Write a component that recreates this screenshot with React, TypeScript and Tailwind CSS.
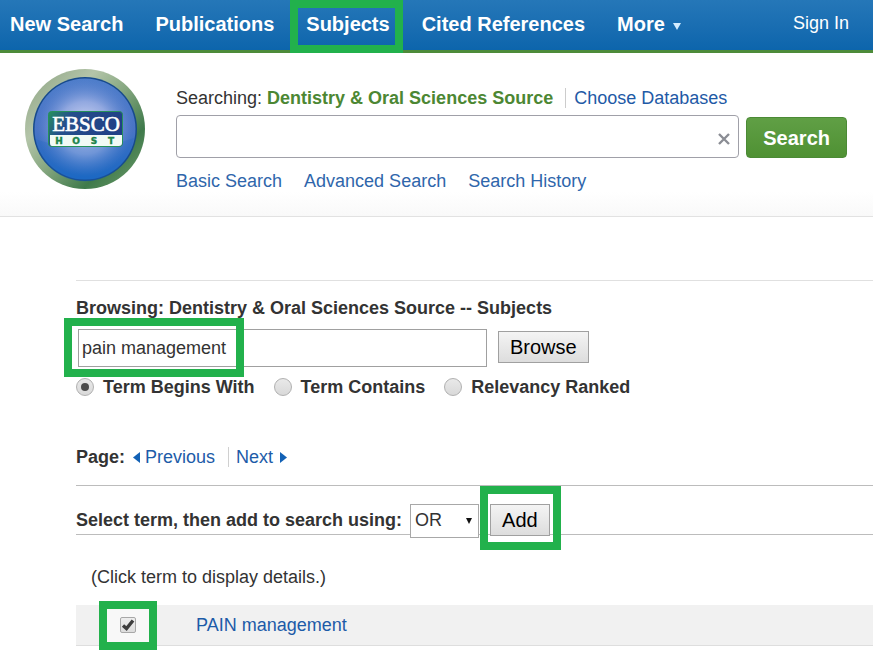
import { useState } from "react";
import type { ReactNode } from "react";
import { clsx } from "clsx";

const NAV_ITEMS = ["New Search", "Publications", "Subjects", "Cited References"];
const SEARCH_MODES = ["Basic Search", "Advanced Search", "Search History"];
const MATCH_TYPES = ["Term Begins With", "Term Contains", "Relevancy Ranked"];

function Highlight({ className }: { className: string }) {
  return <span className={clsx("pointer-events-none absolute z-10 border-8 border-[#22b14c]", className)} />;
}

function GreyButton({ children }: { children: ReactNode }) {
  return (
    <button
      type="button"
      className="h-8 border border-[#a0a0a0] bg-linear-to-b from-[#f4f4f4] to-[#dddddd] px-[11px] text-xl leading-6 text-black"
    >
      {children}
    </button>
  );
}

function Logo() {
  return (
    <svg viewBox="0 0 122 122" className="h-[122px] w-[122px]" role="img" aria-label="EBSCO Host">
      <defs>
        <linearGradient id="rim" x1="0.1" y1="0.1" x2="0.9" y2="0.9">
          <stop offset="0" stopColor="#98ad8e" />
          <stop offset="0.25" stopColor="#b4c5a9" />
          <stop offset="0.5" stopColor="#86a780" />
          <stop offset="0.8" stopColor="#3f7a4b" />
          <stop offset="1" stopColor="#5f9160" />
        </linearGradient>
        <linearGradient id="ball" x1="0" y1="0" x2="0" y2="1">
          <stop offset="0" stopColor="#4f7ecb" />
          <stop offset="0.5" stopColor="#4a74c5" />
          <stop offset="1" stopColor="#1c6ac4" />
        </linearGradient>
        <radialGradient id="shine" cx="0.5" cy="0.5" r="0.5">
          <stop offset="0" stopColor="#e4e6fa" />
          <stop offset="0.55" stopColor="#a9b8e8" stopOpacity="0.75" />
          <stop offset="1" stopColor="#6d90d6" stopOpacity="0" />
        </radialGradient>
        <linearGradient id="plate" x1="0" y1="0" x2="1" y2="0.3">
          <stop offset="0" stopColor="#25925c" />
          <stop offset="0.3" stopColor="#254f8c" />
          <stop offset="1" stopColor="#203f86" />
        </linearGradient>
      </defs>
      <circle cx="61" cy="61" r="60" fill="url(#rim)" />
      <circle cx="61" cy="61" r="52" fill="#174a8c" />
      <circle cx="61" cy="61" r="50.5" fill="url(#ball)" />
      <ellipse cx="61" cy="60" rx="48" ry="48" fill="url(#shine)" />
      <path d="M11 71Q60 88 110 70A50 50 0 0 1 11 71Z" fill="#1b62bf" opacity="0.25" />
      <rect x="24.5" y="43.5" width="74" height="35" rx="3" fill="url(#plate)" stroke="#25915a" />
      <path d="M26 67H98V75Q98 78 95 78H28Q26 78 26 75Z" fill="#f1faf5" />
      <text x="62" y="63" textAnchor="middle" fontSize="21" fill="#ffffff" stroke="#ffffff" strokeWidth="0.6" className="font-['Liberation_Serif',serif]">
        EBSCO
      </text>
      <g fontSize="9" fontWeight="700" fill="#20834a" stroke="#20834a" strokeWidth="0.4" textAnchor="middle" className="font-['DejaVu_Sans',sans-serif]">
        <text x="35" y="76">H</text>
        <text x="52" y="76">O</text>
        <text x="70" y="76">S</text>
        <text x="87" y="76">T</text>
      </g>
    </svg>
  );
}

export default function App() {
  const [query, setQuery] = useState("");
  const [term, setTerm] = useState("pain management");
  const [match, setMatch] = useState(MATCH_TYPES[0]);
  const [operator, setOperator] = useState("OR");
  const [selected, setSelected] = useState(true);

  return (
    <div className="min-h-screen overflow-hidden bg-white font-['Liberation_Sans',Arial,sans-serif] text-lg leading-6 text-[#333333]">
      <nav className="flex items-center justify-between border-b-3 border-[#4d8b3a] bg-linear-to-b from-[#2577b8] to-[#0c65ac] pr-6 pl-[10px] text-white">
        <div className="flex items-center gap-8 text-xl font-bold">
          {NAV_ITEMS.map((item) => (
            <a key={item} href="#" className="relative flex h-[50px] items-center pb-[2px] whitespace-nowrap">
              {item}
              {item === "Subjects" && <Highlight className="top-0 -right-[13px] -bottom-[3px] -left-4" />}
            </a>
          ))}
          <button type="button" className="flex items-center gap-2 pb-[2px]">
            More
            <svg viewBox="0 0 8 7" className="mt-1 h-[7px] w-2" fill="#d5edff">
              <path d="M0 0H8L4 7Z" />
            </svg>
          </button>
        </div>
        <a href="#" className="pb-1 whitespace-nowrap">Sign In</a>
      </nav>

      <header className="flex items-start gap-[30px] border-b border-[#e2e2e2] bg-linear-to-b from-white from-85% to-[#f9f9f9] pt-[15px] pr-[26px] pb-[23px] pl-6">
        <div className="h-[120px] shrink-0">
          <Logo />
        </div>
        <div className="min-w-0 grow pt-[18px]">
          <div className="flex items-center whitespace-nowrap">
            <span>Searching:</span>
            <strong className="ml-[5px] text-[#4c8733]">Dentistry &amp; Oral Sciences Source</strong>
            <a href="#" className="ml-3 border-l border-[#cccccc] pl-2 leading-5 text-[#1f5aa6]">Choose Databases</a>
          </div>
          <form className="mt-[5px] flex items-end gap-[7px]" onSubmit={(e) => e.preventDefault()}>
            <div className="relative grow">
              <input
                type="text"
                aria-label="Search terms"
                value={query}
                onChange={(e) => setQuery(e.target.value)}
                className="block h-[43px] w-full rounded border border-[#a0a0a8] bg-white pr-9 pl-2 outline-none"
              />
              <button type="button" aria-label="Clear" onClick={() => setQuery("")} className="absolute top-[18px] right-[9px]">
                <svg viewBox="0 0 12 12" className="h-3 w-3" stroke="#8b8d94" strokeWidth="2.4">
                  <path d="M1 1L11 11M11 1L1 11" />
                </svg>
              </button>
            </div>
            <button
              type="submit"
              className="h-[41px] rounded border border-[#4b8a35] bg-linear-to-b from-[#609f45] to-[#4f9133] px-4 text-xl font-bold text-white"
            >
              Search
            </button>
          </form>
          <div className="mt-[11px] flex gap-[22px] text-[#2f66ab]">
            {SEARCH_MODES.map((mode) => (
              <a key={mode} href="#">{mode}</a>
            ))}
          </div>
        </div>
      </header>

      <main className="mt-[63px] ml-[76px] border-t border-[#e0e0e0] pt-[15px]">
        <h1 className="font-bold">Browsing: Dentistry &amp; Oral Sciences Source -- Subjects</h1>
        <div className="mt-[9px] ml-[2px] flex items-start gap-[11px]">
          <div className="relative w-[409px]">
            <input
              type="text"
              aria-label="Browse for"
              value={term}
              onChange={(e) => setTerm(e.target.value)}
              className="block h-[38px] w-full border border-[#a0a0a0] bg-white px-[3px] outline-none"
            />
            <Highlight className="-top-[11px] -left-[14px] h-[59px] w-[180px]" />
          </div>
          <div className="flex pt-[2px]">
            <GreyButton>Browse</GreyButton>
          </div>
        </div>

        <div className="mt-2 flex items-center gap-[19px] font-bold whitespace-nowrap">
          {MATCH_TYPES.map((type) => (
            <label key={type} className="flex items-center gap-[9px]">
              <span className="relative flex">
                <input
                  type="radio"
                  name="match"
                  checked={match === type}
                  onChange={() => setMatch(type)}
                  className="h-[18px] w-[18px] appearance-none rounded-full border border-[#b0b0b0] bg-linear-to-b from-[#e9e9e9] to-[#d9d9d9]"
                />
                {match === type && (
                  <span className="pointer-events-none absolute inset-[5px] rounded-full bg-[#4d4d4d]" />
                )}
              </span>
              {type}
            </label>
          ))}
        </div>

        <div className="mt-[46px] flex items-center">
          <strong>Page:</strong>
          <a href="#" className="ml-2 flex items-center gap-[5px] text-[#1d5ba8]">
            <svg viewBox="0 0 7 11" className="h-[11px] w-[7px]" fill="#1261b5">
              <path d="M7 0V11L0 5.5Z" />
            </svg>
            Previous
          </a>
          <a href="#" className="ml-[13px] flex items-center gap-[7px] border-l border-[#d0d0d0] pl-[7px] leading-5 text-[#1d5ba8]">
            Next
            <svg viewBox="0 0 7 11" className="h-[11px] w-[7px]" fill="#1261b5">
              <path d="M0 0L7 5.5L0 11Z" />
            </svg>
          </a>
        </div>

        <section className="mt-4 flex h-[50px] items-start border-y border-[#bcbcbc] pt-[18px]">
          <label htmlFor="operator" className="pt-1 font-bold">Select term, then add to search using:</label>
          <div className="relative ml-2">
            <select
              id="operator"
              value={operator}
              onChange={(e) => setOperator(e.target.value)}
              className="block h-[34px] w-[69px] appearance-none border border-[#a8a8a8] bg-white pb-[2px] pl-1 outline-none"
            >
              <option>OR</option>
              <option>AND</option>
            </select>
            <svg viewBox="0 0 6 6" className="pointer-events-none absolute top-[14px] right-[7px] h-[6px] w-[6px]" fill="#111111">
              <path d="M0 0H6L3 6Z" />
            </svg>
          </div>
          <div className="relative ml-[11px] bg-white">
            <GreyButton>Add</GreyButton>
            <Highlight className="-top-[18px] -right-[11px] -bottom-[14px] -left-[10px]" />
          </div>
        </section>

        <p className="mt-[30px] ml-[15px]">(Click term to display details.)</p>
        <div className="mt-4 flex h-[41px] items-center border-b border-[#dedede] bg-[#f1f1f1]">
          <div className="relative ml-[23px] flex h-[49px] w-[58px] shrink-0 items-center justify-center bg-[#f8f8f8]">
            <input
              id="pain-management"
              type="checkbox"
              aria-label="PAIN management"
              checked={selected}
              onChange={(e) => setSelected(e.target.checked)}
              className="h-4 w-4 appearance-none rounded-xs border border-[#a8a8a8] bg-linear-to-b from-[#eeeeee] to-[#dddddd]"
            />
            {selected && (
              <svg viewBox="0 0 14 14" className="pointer-events-none absolute h-[14px] w-[14px]" fill="none" stroke="#3d3d3d" strokeWidth="3.4">
                <path d="M2 7.5L5.5 10.5L12 2.5" />
              </svg>
            )}
            <Highlight className="inset-0" />
          </div>
          <a href="#" className="ml-[39px] text-[#1d5ba8]">PAIN management</a>
        </div>
      </main>
    </div>
  );
}
